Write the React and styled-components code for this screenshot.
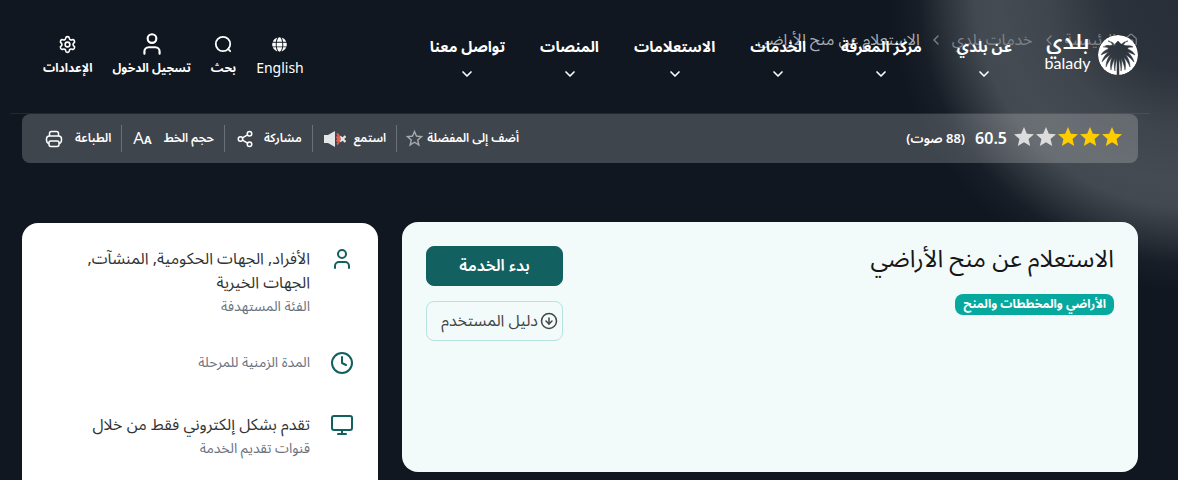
import React from 'react';
import styled, { createGlobalStyle } from 'styled-components';
import {
  ChevronDown,
  ChevronLeft,
  CircleArrowDown,
  Clock,
  House,
  Monitor,
  Settings,
  Share2,
  User,
} from 'lucide-react';
import { FaGlobe } from 'react-icons/fa';
import { MdStar, MdStarBorder } from 'react-icons/md';

const GlobalStyles = createGlobalStyle`
  *, *::before, *::after {
    box-sizing: border-box;
  }

  body {
    margin: 0;
    background: #101720;
    font-family: 'Noto Sans Arabic', 'Noto Sans', sans-serif;
    font-size: 16px;
    line-height: 24px;
    overflow: hidden;
  }

  a {
    color: inherit;
    text-decoration: none;
  }

  button {
    font-family: inherit;
    cursor: pointer;
  }
`;

const Page = styled.div`
  position: relative;
  min-height: 100vh;
  padding: 28px 40px 0 22px;
  background:
    radial-gradient(
      circle at 101% -8px,
      #272e37 0,
      #2b323b 80px,
      #3f454c 140px,
      #454b52 190px,
      #434950 215px,
      #2c333b 245px,
      #171e27 272px,
      #101720 300px
    )
    #101720;
`;

const Header = styled.header`
  position: absolute;
  z-index: 2;
  top: 0;
  left: 10px;
  right: 28px;
  display: flex;
  align-items: flex-start;
  height: 114px;
  padding: 32px 12px 0 33px;
  border-bottom: 1px solid rgba(255, 255, 255, 0.08);
  color: #fff;
`;

const Logo = styled.a`
  display: flex;
  align-items: center;
  gap: 6px;
  margin-top: 3px;
  margin-left: 31px;
`;

const LogoText = styled.span`
  display: flex;
  flex-direction: column;
  align-items: center;
  width: 49px;
  height: 40px;
`;

const LogoArabic = styled.span`
  font-family: 'Noto Kufi Arabic', 'Noto Sans Arabic', sans-serif;
  font-size: 20px;
  font-weight: 600;
  line-height: 14px;
`;

const LogoLatin = styled.span`
  font-family: Lato, sans-serif;
  font-size: 16px;
  line-height: 28px;
`;

const Nav = styled.nav`
  display: flex;
  gap: 35px;
`;

const NavItem = styled.a`
  display: flex;
  flex-direction: column;
  align-items: center;
  gap: 7px;
  padding-top: 3px;
  font-size: 15px;
  font-weight: 700;
  white-space: nowrap;
`;

const Tools = styled.div`
  display: flex;
  gap: 20px;
  margin-right: auto;
`;

const Tool = styled.a`
  display: flex;
  flex-direction: column;
  align-items: center;
  gap: 2px;
  font-size: ${props => (props.$latin ? '14px' : '12px')};
  font-weight: ${props => (props.$latin ? 400 : 700)};
  line-height: 22px;
  white-space: nowrap;
`;

const ToolIcon = styled.span`
  display: flex;
  align-items: center;
  justify-content: center;
  height: 24px;
`;

const Breadcrumb = styled.nav`
  display: flex;
  align-items: center;
  gap: 8px;
  height: 24px;
  color: #7d8289;
  white-space: nowrap;
`;

const Current = styled.span`
  color: #a9adb2;
`;

const Toolbar = styled.section`
  display: flex;
  align-items: center;
  justify-content: space-between;
  height: 49px;
  margin-top: 62px;
  padding: 0 14px 0 23px;
  border-radius: 8px;
  background: rgba(255, 255, 255, 0.2);
  color: #fff;
`;

const Rating = styled.div`
  display: flex;
  align-items: center;
  gap: 10px;
  font-size: 13px;
  font-weight: 600;
`;

const Stars = styled.span`
  display: flex;
  margin-left: -5px;
  padding-bottom: 4px;

  svg + svg {
    margin-right: -2px;
  }
`;

const Score = styled.strong`
  font-size: 16px;
  font-weight: 600;
`;

const Actions = styled.div`
  display: flex;
  align-items: center;
`;

const Action = styled.button`
  display: flex;
  align-items: center;
  gap: ${props => props.$gap || 12}px;
  height: 27px;
  padding: 0 10px 0 11px;
  border: 0;
  border-left: 1px solid #6b7077;
  background: none;
  color: #fff;
  font-size: 12px;
  font-weight: 600;
  white-space: nowrap;

  &:first-child {
    padding-left: 7px;
  }

  &:last-child {
    padding-left: 0;
    border-left: 0;
  }
`;

const Columns = styled.main`
  display: grid;
  grid-template-columns: calc(100% * 2 / 3 - 8px) 1fr;
  align-items: start;
  gap: 24px;
  margin-top: 59px;
`;

const ServiceCard = styled.section`
  display: flex;
  justify-content: space-between;
  min-height: 250px;
  padding: 24px;
  border-radius: 16px;
  background: #f2fbfa;
`;

const Title = styled.h1`
  margin: 0 0 20px;
  color: #161616;
  font-size: 24px;
  font-weight: 400;
  line-height: 28px;
`;

const Tag = styled.span`
  display: block;
  width: fit-content;
  padding: 0 8px;
  border-radius: 8px;
  background: #07a89d;
  color: #fff;
  font-size: 12px;
  font-weight: 700;
  line-height: 21px;
`;

const CardButtons = styled.div`
  display: flex;
  flex-direction: column;
  gap: 15px;
  width: 137px;
`;

const CardButton = styled.button`
  display: flex;
  align-items: center;
  justify-content: ${props => (props.$primary ? 'center' : 'flex-start')};
  gap: 2px;
  height: 40px;
  padding: 0 4px;
  border: 1px solid ${props => (props.$primary ? '#12605f' : '#b5e3df')};
  border-radius: 8px;
  background: ${props => (props.$primary ? '#12605f' : 'transparent')};
  color: ${props => (props.$primary ? '#fff' : '#454545')};
  font-size: 16px;
  font-weight: ${props => (props.$primary ? 600 : 400)};
  white-space: nowrap;
`;

const InfoCard = styled.aside`
  display: flex;
  flex-direction: column;
  gap: 32px;
  margin-top: 1px;
  padding: 24px 24px 48px;
  border-radius: 16px;
  background: #fff;
`;

const InfoRow = styled.div`
  display: flex;
  align-items: flex-start;
  gap: 20px;
  min-height: 30px;

  svg {
    flex: none;
    color: #12605f;
  }
`;

const InfoValue = styled.div`
  color: #333;
`;

const InfoLabel = styled.div`
  color: #6c737f;
  font-size: 14px;
`;

const fronds = [
  'M20 15C14 10 9 9 5 12C10 12 14 14 20 17Z',
  'M20 14C14 12 6 14 3 20C8 17 14 16 20 17Z',
  'M20 15C13 14 6 19 4 27C9 21 14 18 20 18Z',
  'M20 15C14 16 8 23 8 32C11 25 15 20 20 19Z',
  'M20 15C15 18 11 26 13 35C14 28 17 22 20 20Z',
  'M20 15C17 20 15 28 17 36C17 29 19 24 20 21Z',
  'M20 15C18 10 14 6 10 6C14 8 17 11 20 17Z',
];

function PalmLogo() {
  return (
    <svg width="40" height="40" viewBox="0 0 40 40" aria-hidden="true">
      <mask id="palm">
        <circle cx="20" cy="20" r="20" fill="#fff" />
        <g fill="#000" stroke="#000" strokeWidth="0.5">
          {fronds.map(d => <path key={d} d={d} />)}
          <g transform="translate(40 0) scale(-1 1)">
            {fronds.map(d => <path key={d} d={d} />)}
          </g>
          <path d="M10 13Q14 9 17 9L20 6L23 9Q26 9 30 13L26 21L20 24L14 21Z" />
          <path d="M19 15H21L21 40H19Z" />
        </g>
      </mask>
      <circle cx="20" cy="20" r="20" fill="#fff" mask="url(#palm)" />
    </svg>
  );
}

function SearchIcon() {
  return (
    <svg width="18" height="18" viewBox="0 0 18 18" fill="none" stroke="currentColor" strokeWidth="1.8" strokeLinecap="round">
      <circle cx="9" cy="9" r="7.2" />
      <path d="M14.2 14.2L16.2 16.2" />
    </svg>
  );
}

function PrintIcon() {
  return (
    <svg width="18" height="18" viewBox="0 0 18 18" fill="none" stroke="currentColor" strokeWidth="1.5" strokeLinejoin="round">
      <path d="M4.5 6V3.5Q4.5 1.5 6.5 1.5H11.5Q13.5 1.5 13.5 3.5V6" />
      <path d="M4 13.5Q1.5 13 1.5 10V9Q1.5 6 4.5 6H13.5Q16.5 6 16.5 9V10Q16.5 13 14 13.5" />
      <path d="M5.5 11H12.5Q14 11 14 13V14.5Q14 16.5 12 16.5H6Q4 16.5 4 14.5V13Q4 11 5.5 11Z" />
    </svg>
  );
}

const FontSizeIcon = styled.span`
  display: flex;
  align-items: baseline;
  direction: ltr;
  font-family: 'Open Sans', sans-serif;
  font-size: 17px;
  font-weight: 400;
  line-height: 20px;

  small {
    font-size: 11px;
    font-weight: 700;
  }
`;

function MutedIcon() {
  return (
    <svg width="22" height="18" viewBox="0 0 22 18" fill="none">
      <path d="M0 5H4L11 1V17L4 13H0Z" fill="#e3e5e6" />
      <path d="M16 6.5L21.5 12M21.5 6L16 11.5" stroke="#e3e5e6" strokeWidth="2.4" />
      <path d="M13 3.5Q18.5 9 13 14.5M12.5 6.5Q15.5 9 12.5 11.5" stroke="#e8604c" strokeWidth="1.8" />
    </svg>
  );
}

const navItems = ['عن بلدي', 'مركز المعرفة', 'الخدمات', 'الاستعلامات', 'المنصات', 'تواصل معنا'];

const tools = [
  { label: 'English', icon: <FaGlobe size={15} />, latin: true },
  { label: 'بحث', icon: <SearchIcon /> },
  { label: 'تسجيل الدخول', icon: <User size={26} /> },
  { label: 'الإعدادات', icon: <Settings size={19} /> },
];

const actions = [
  { label: 'أضف إلى المفضلة', icon: <MdStarBorder size={21} color="#a8abaf" />, gap: 2 },
  { label: 'استمع', icon: <MutedIcon />, gap: 8 },
  { label: 'مشاركة', icon: <Share2 size={18} />, gap: 10 },
  { label: 'حجم الخط', icon: <FontSizeIcon aria-hidden="true">A<small>A</small></FontSizeIcon> },
  { label: 'الطباعة', icon: <PrintIcon /> },
];

const info = [
  { icon: User, value: 'الأفراد, الجهات الحكومية, المنشآت, الجهات الخيرية', label: 'الفئة المستهدفة' },
  { icon: Clock, label: 'المدة الزمنية للمرحلة' },
  { icon: Monitor, value: 'تقدم بشكل إلكتروني فقط من خلال', label: 'قنوات تقديم الخدمة' },
];

function App() {
  return (
    <Page dir="rtl" lang="ar">
      <GlobalStyles />
      <Header>
        <Logo href="#">
          <PalmLogo />
          <LogoText>
            <LogoArabic>بلدي</LogoArabic>
            <LogoLatin>balady</LogoLatin>
          </LogoText>
        </Logo>
        <Nav>
          {navItems.map(item => (
            <NavItem key={item} href="#">
              {item}
              <ChevronDown size={16} strokeWidth={2.5} />
            </NavItem>
          ))}
        </Nav>
        <Tools>
          {tools.map(tool => (
            <Tool key={tool.label} href="#" $latin={tool.latin}>
              <ToolIcon>{tool.icon}</ToolIcon>
              {tool.label}
            </Tool>
          ))}
        </Tools>
      </Header>

      <Breadcrumb>
        <House size={14} />
        <a href="#">الرئيسية</a>
        <ChevronLeft size={16} />
        <a href="#">خدمات بلدي</a>
        <ChevronLeft size={16} />
        <Current>الاستعلام عن منح الأراضي</Current>
      </Breadcrumb>

      <Toolbar>
        <Rating>
          <Stars>
            {[1, 2, 3, 4, 5].map(n => (
              <MdStar key={n} size={24} color={n <= 3 ? '#ffcc00' : '#dcdcdc'} />
            ))}
          </Stars>
          <Score>60.5</Score>
          <span>(88 صوت)</span>
        </Rating>
        <Actions>
          {actions.map(action => (
            <Action key={action.label} type="button" $gap={action.gap}>
              {action.label}
              {action.icon}
            </Action>
          ))}
        </Actions>
      </Toolbar>

      <Columns>
        <ServiceCard>
          <div>
            <Title>الاستعلام عن منح الأراضي</Title>
            <Tag>الأراضي والمخططات والمنح</Tag>
          </div>
          <CardButtons>
            <CardButton type="button" $primary>بدء الخدمة</CardButton>
            <CardButton type="button">
              <CircleArrowDown size={18} />
              دليل المستخدم
            </CardButton>
          </CardButtons>
        </ServiceCard>
        <InfoCard>
          {info.map(({ icon: Icon, value, label }) => (
            <InfoRow key={label}>
              <Icon size={24} />
              <div>
                {value && <InfoValue>{value}</InfoValue>}
                <InfoLabel>{label}</InfoLabel>
              </div>
            </InfoRow>
          ))}
        </InfoCard>
      </Columns>
    </Page>
  );
}

export default App;
